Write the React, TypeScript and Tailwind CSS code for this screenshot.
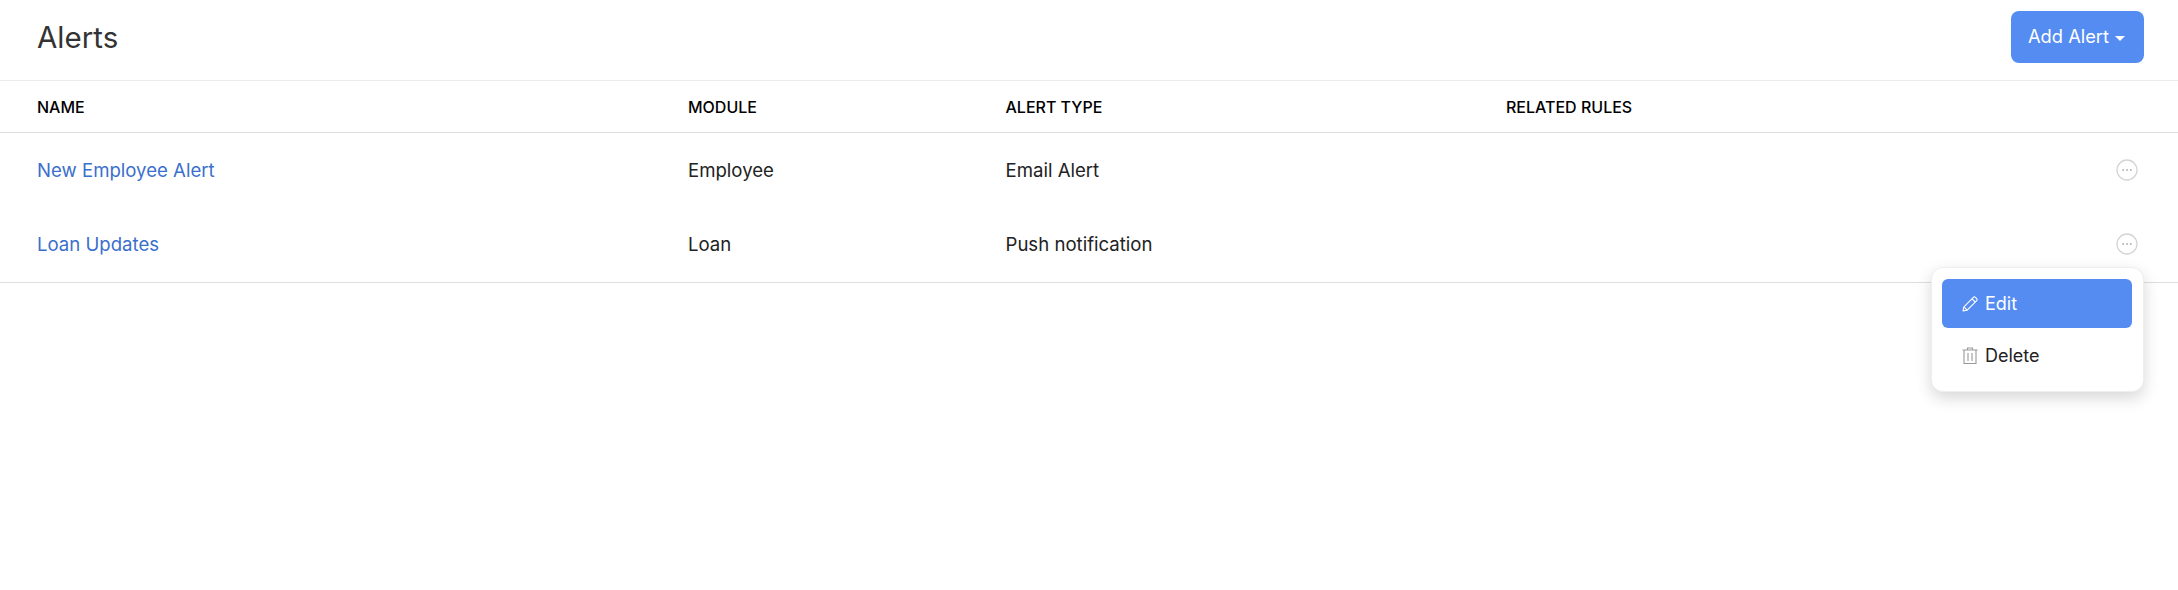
import React from "react";

const alerts = [
  { name: "New Employee Alert", module: "Employee", type: "Email Alert" },
  { name: "Loan Updates", module: "Loan", type: "Push notification" },
];

const rowClass = "grid grid-cols-[651px_317.5px_500.5px_1fr] pl-[37px] pr-[40px]";

function MoreIcon() {
  return (
    <svg width="22" height="22" viewBox="0 0 22 22" fill="none">
      <circle cx="11" cy="11" r="10" stroke="#d4d4d4" strokeWidth="1.3" />
      <circle cx="7.2" cy="11" r="1" fill="#b5b5b5" />
      <circle cx="11" cy="11" r="1" fill="#b5b5b5" />
      <circle cx="14.8" cy="11" r="1" fill="#b5b5b5" />
    </svg>
  );
}

function PencilIcon() {
  return (
    <svg width="16" height="16" viewBox="0 0 16 16" fill="none" stroke="#fff" strokeWidth="1.1" strokeLinejoin="round">
      <path d="M1 15l.9-4.2L11.4 1.3a1.4 1.4 0 0 1 2 0l1.3 1.3a1.4 1.4 0 0 1 0 2L5.2 14.1 1 15z" />
      <path d="M1.9 10.8l3.3 3.3M10 2.8l3.2 3.2" />
    </svg>
  );
}

function TrashIcon() {
  return (
    <svg width="16" height="17" viewBox="0 0 16 17" fill="none" stroke="#9a9a9a" strokeWidth="1.1">
      <path d="M.5 3h15M5.5 3V1h5v2M2 3v13.5h12V3M6 6v8M10 6v8" />
    </svg>
  );
}

export default function App() {
  return (
    <div className="relative h-[590px] w-full bg-white font-['Inter',sans-serif]">
      <header className="flex h-[81px] items-center justify-between border-b border-[#ececec] pl-[37px] pr-[34px]">
        <h1 className="-mt-[5px] text-[29.5px] font-normal text-[#333333]">Alerts</h1>
        <button className="-mt-[6px] flex h-[52px] w-[133px] items-center justify-center gap-[6px] rounded-lg bg-[#548cf2] pr-[2px] text-[18.3px] text-white">
          Add Alert
          <span className="mt-[2px] h-0 w-0 border-x-[5px] border-t-[5px] border-x-transparent border-t-white" />
        </button>
      </header>

      <div className={`${rowClass} h-[52px] items-center border-b border-[#dedede] text-[16px] font-medium text-black`}>
        <div>NAME</div>
        <div>MODULE</div>
        <div>ALERT TYPE</div>
        <div>RELATED RULES</div>
      </div>

      <div className="border-b border-[#dedede] pb-[1px]">
        {alerts.map((alert) => (
          <div key={alert.name} className={`${rowClass} h-[74px] items-center text-[18.6px] text-[#222222]`}>
            <a className="pt-[2px] text-[#3b6fcc]">{alert.name}</a>
            <div className="pt-[2px]">{alert.module}</div>
            <div className="pt-[2px]">{alert.type}</div>
            <div className="flex justify-end">
              <MoreIcon />
            </div>
          </div>
        ))}
      </div>

      <div className="absolute left-[1931px] top-[267px] h-[125px] w-[213px] rounded-xl border border-[#eeeeee] bg-white pl-[10px] pr-[11px] pt-[11px] shadow-[0_6px_16px_rgba(0,0,0,0.16)]">
        <div className="flex h-[49px] items-center gap-[7px] rounded-md bg-[#548cf2] pl-[20px] text-[18px] text-white">
          <PencilIcon />
          Edit
        </div>
        <div className="mt-[3px] flex h-[49px] items-center gap-[7px] pl-[20px] text-[18px] text-[#222222]">
          <TrashIcon />
          Delete
        </div>
      </div>
    </div>
  );
}
